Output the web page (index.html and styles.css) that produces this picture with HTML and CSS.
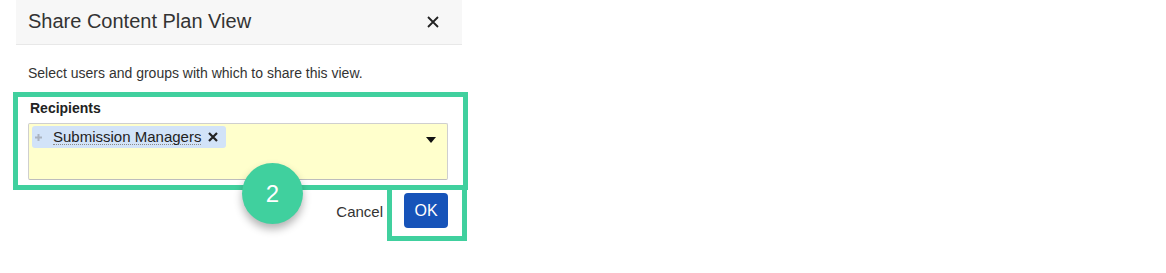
FILE: index.html
```html
<!DOCTYPE html>
<html lang="en">
<head>
  <meta charset="UTF-8">
  <title>Share Content Plan View</title>
  <link rel="stylesheet" href="styles.css">
</head>
<body>
  <div class="page">
    <div class="dialog">
      <div class="header">
        <span class="title">Share Content Plan View</span>
        <svg class="close" width="12" height="12" viewBox="0 0 12 12">
          <path d="M1 1l10 10M11 1L1 11" stroke="#222" stroke-width="1.8"/>
        </svg>
      </div>

      <div class="content">
        <p class="intro">Select users and groups with which to share this view.</p>

        <label class="field-label">Recipients</label>
        <div class="picker">
          <span class="tag">
            <svg class="grip" width="7" height="7" viewBox="0 0 7 7">
              <path d="M3.5 0v7M0 3.5h7" stroke="#aab3bf" stroke-width="2"/>
            </svg>
            <span class="tag-name">Submission Managers</span>
            <svg class="tag-remove" width="10" height="10" viewBox="0 0 10 10">
              <path d="M1 1l8 8M9 1l-8 8" stroke="#222" stroke-width="2.2"/>
            </svg>
          </span>
          <svg class="caret" width="10" height="6" viewBox="0 0 10 6">
            <path d="M0 0h10L5 6z" fill="#111"/>
          </svg>
        </div>
      </div>

      <div class="footer">
        <span class="cancel">Cancel</span>
        <button class="ok">OK</button>
      </div>
    </div>

    <!-- annotation overlays -->
    <div class="mark mark-field"></div>
    <div class="mark mark-ok"></div>
    <div class="step">2</div>
  </div>
</body>
</html>
```

FILE: styles.css
```css
* {
  box-sizing: border-box;
}

body {
  margin: 0;
  background: #fff;
  font-family: 'Liberation Sans', Arial, sans-serif;
  color: #222;
}

.page {
  position: relative;
  width: 1166px;
  height: 273px;
}

.dialog {
  width: 446px;
  margin-left: 16px;
}

.header {
  height: 45px;
  background: #f7f7f7;
  border-bottom: 1px solid #e8e8e8;
  display: flex;
  align-items: center;
  justify-content: space-between;
  padding: 0 23px 0 12px;
}

.title {
  font-size: 20px;
  color: #333;
  margin-top: -1px;
}

.close {
  margin-top: 0;
}

.content {
  padding: 0 14px 0 12px;
}

.intro {
  margin: 20px 0 0;
  font-size: 14px;
  line-height: 17px;
  color: #333;
}

.field-label {
  display: block;
  margin: 18px 0 0 2px;
  font-size: 14px;
  line-height: 17px;
  font-weight: bold;
  color: #222;
}

.picker {
  position: relative;
  margin-top: 6px;
  height: 57px;
  background: #ffffcc;
  border: 1px solid #cfcfcf;
  border-bottom-color: #bdbdbd;
  border-radius: 2px;
  padding: 2px 3px;
}

.tag {
  display: inline-flex;
  align-items: center;
  height: 22px;
  padding: 0 8px 0 3px;
  background: #d2e3f8;
  border-radius: 3px;
  font-size: 15px;
  color: #222;
}

.grip {
  margin-right: 11px;
}

.tag-name {
  border-bottom: 1px dotted #8a8a8a;
  line-height: 15px;
}

.tag-remove {
  margin-left: 7px;
}

.caret {
  position: absolute;
  right: 11px;
  top: 13px;
}

.footer {
  display: flex;
  justify-content: flex-end;
  align-items: center;
  gap: 21px;
  padding: 13px 14px 0 0;
}

.cancel {
  font-size: 15px;
  color: #333;
  margin-top: 2px;
}

.ok {
  width: 44px;
  height: 35px;
  border: none;
  border-radius: 4px;
  background: #1653b9;
  color: #fff;
  font-family: 'Liberation Sans', Arial, sans-serif;
  font-size: 16px;
  padding: 0;
}

.mark {
  position: absolute;
  border: 5px solid #40d09e;
}

.mark-field {
  left: 13px;
  top: 92px;
  width: 455px;
  height: 98px;
}

.mark-ok {
  left: 387px;
  top: 185px;
  width: 80px;
  height: 56px;
  border-top: none;
}

.step {
  position: absolute;
  left: 242px;
  top: 163px;
  width: 61px;
  height: 61px;
  border-radius: 50%;
  background: #40d09e;
  color: #fff;
  font-size: 24px;
  display: flex;
  align-items: center;
  justify-content: center;
  box-shadow: 0 5px 8px rgba(0, 0, 0, 0.3);
}
```
